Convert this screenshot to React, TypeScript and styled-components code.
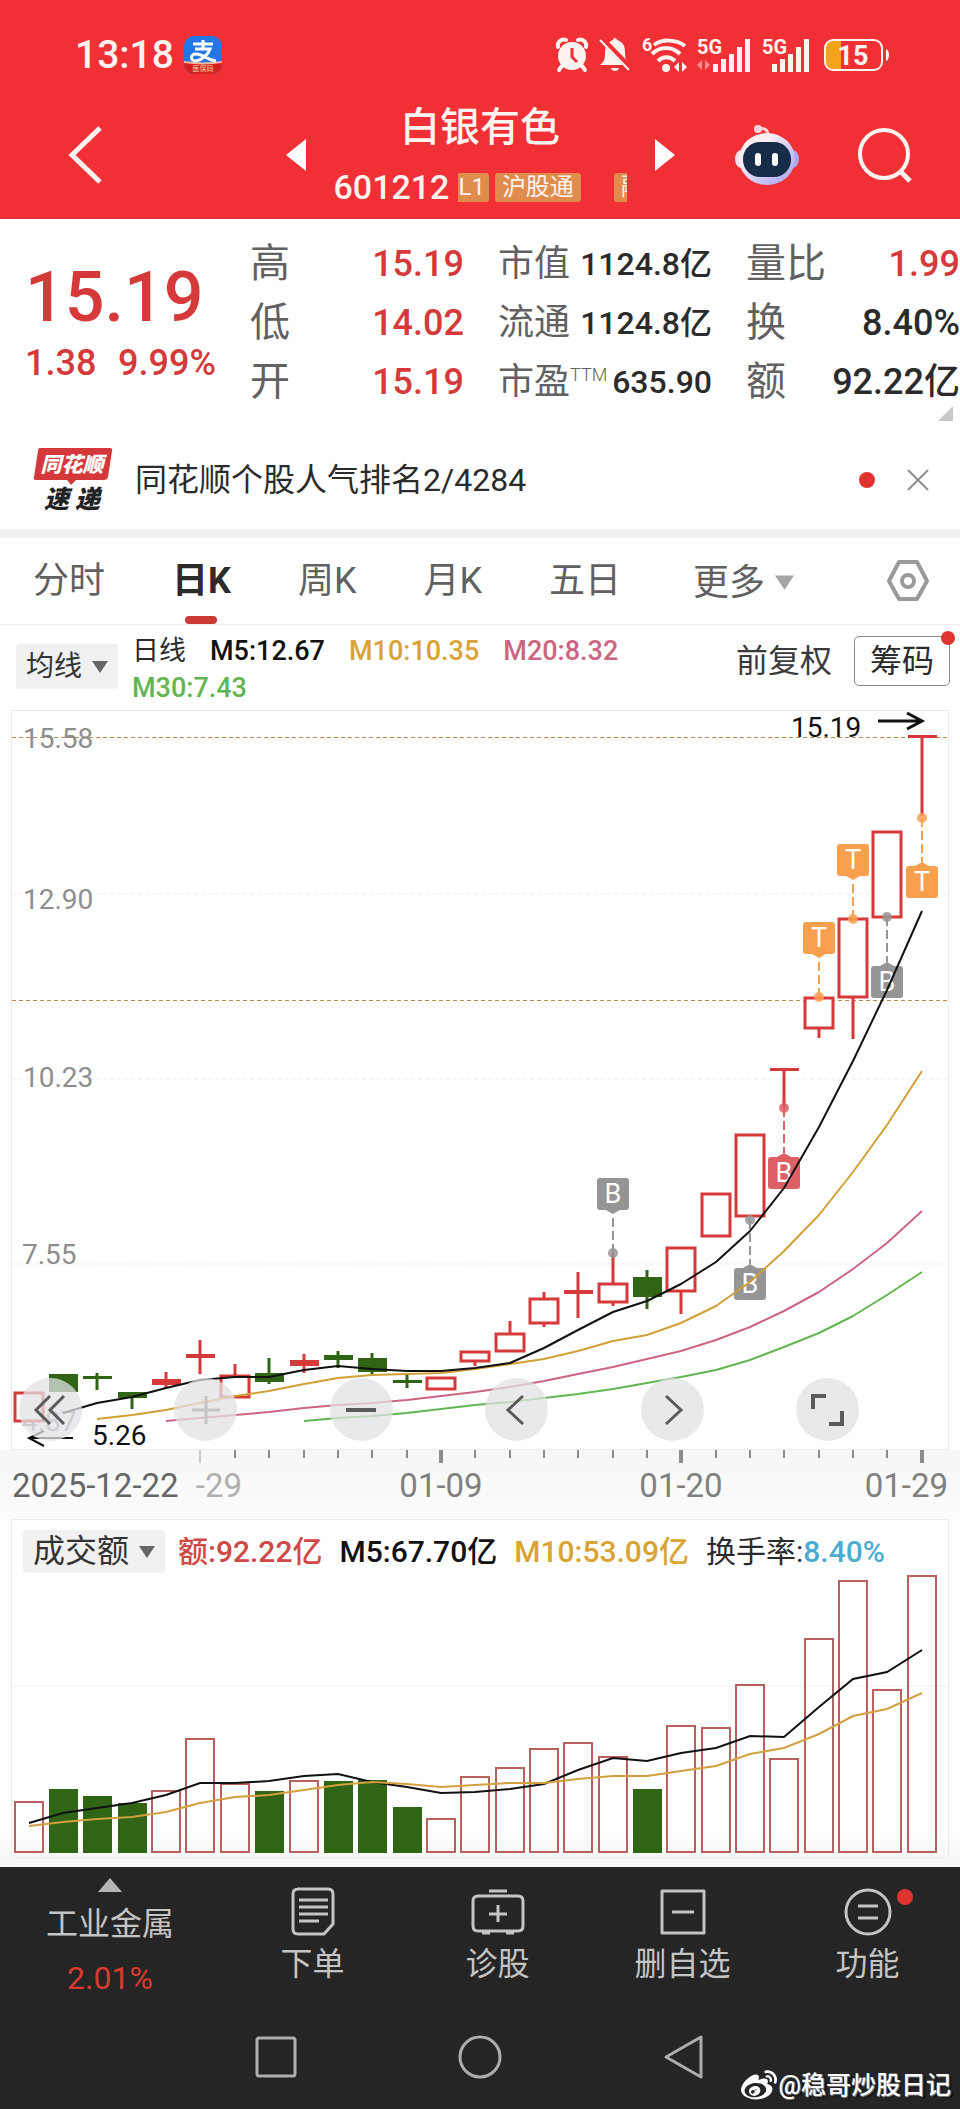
import React from "react";
import styled, { createGlobalStyle } from "styled-components";
import { FaWeibo } from "react-icons/fa";

const colors = {
  brand: "#f13035",
  rise: "#d5393a",
  fall: "#2f6515",
  gold: "#d9a336",
  pink: "#cc6680",
  lime: "#63b552",
  orange: "#f9a04f",
  marker: "#959595",
  text: "#2b2b2b",
  label: "#616161",
  dark: "#252525",
};

const GlobalStyle = createGlobalStyle`
  * { box-sizing: border-box; }
  body {
    margin: 0;
    background: #fff;
    color: ${colors.text};
    font-family: Roboto, "Noto Sans CJK SC", sans-serif;
  }
  button, select {
    margin: 0;
    padding: 0;
    border: 0;
    background: none;
    color: inherit;
    font: inherit;
    cursor: pointer;
  }
  svg { display: block; flex: none; overflow: visible; }
`;

const Page = styled.div`
  position: relative;
  overflow: hidden;
`;

/* ---------- header ---------- */

const Header = styled.header`
  background: ${colors.brand};
  color: #fff3f0;
`;

const StatusBar = styled.div`
  display: flex;
  align-items: center;
  padding: 35px 70px 15px 75px;
`;

const Clock = styled.time`
  font-size: 39px;
  line-height: 40px;
  font-weight: 500;
  margin-right: 10px;
`;

const StatusIcons = styled.div`
  display: flex;
  align-items: center;
  gap: 11px;
  margin-left: auto;
`;

const NavBar = styled.div`
  display: grid;
  grid-template-columns: 1fr auto 1fr;
  align-items: center;
  padding: 10px 48px 9px;
`;

const NavSide = styled.div<{ $end?: boolean }>`
  display: flex;
  align-items: center;
  justify-content: ${(p) => (p.$end ? "flex-end" : "flex-start")};
  gap: 59px;
  padding-left: ${(p) => (p.$end ? 0 : 20)}px;
`;

const StockSwitch = styled.div`
  display: flex;
  align-items: center;
  gap: 28px;
`;

const StockTitle = styled.div`
  width: 293px;
`;

const StockName = styled.h1`
  margin: 0;
  font-size: 40px;
  line-height: 56px;
  font-weight: 500;
  text-align: center;
`;

const CodeRow = styled.div`
  display: flex;
  align-items: center;
  gap: 9px;
  margin-top: 8px;
  font-size: 34px;
  line-height: 46px;
  font-weight: 500;
`;

const TagTicker = styled.div`
  display: flex;
  flex: 1;
  overflow: hidden;
`;

const Tag = styled.span<{ $cut?: boolean; $gap?: number }>`
  flex: none;
  padding: ${(p) => (p.$cut ? "0 4px 0 0" : "0 7px")};
  margin-left: ${(p) => p.$gap ?? 0}px;
  border-radius: ${(p) => (p.$cut ? "0 3px 3px 0" : "3px")};
  background: #e08c4c;
  font-size: 24px;
  line-height: 29px;
  font-weight: 400;
`;

/* ---------- quote ---------- */

const Quote = styled.section`
  position: relative;
  display: grid;
  grid-template-columns: 216px repeat(3, 1fr);
  column-gap: 34px;
  padding: 15px 0 22px;
`;

const PriceBlock = styled.div`
  color: ${colors.rise};
  font-weight: 500;
  padding-left: 25px;
  white-space: nowrap;
`;

const Price = styled.div`
  margin-top: 19px;
  padding-right: 16px;
  font-size: 70px;
  line-height: 88px;
  text-align: center;
`;

const Change = styled.div`
  display: flex;
  justify-content: space-between;
  font-size: 36px;
  line-height: 44px;
`;

const Stats = styled.dl`
  margin: 0;
`;

const StatRow = styled.div<{ $dense?: boolean }>`
  display: flex;
  align-items: center;
  justify-content: space-between;
  height: 59px;
  line-height: 48px;
  white-space: nowrap;
  font-size: ${(p) => (p.$dense ? 32 : 36)}px;
  dt {
    color: ${colors.label};
    font-size: ${(p) => (p.$dense ? 36 : 40)}px;
  }
`;

const StatValue = styled.dd<{ $rise?: boolean }>`
  margin: 0;
  font-weight: 500;
  color: ${(p) => (p.$rise ? colors.rise : colors.text)};
`;

const Sup = styled.sup`
  font-size: 18px;
  line-height: 18px;
  font-weight: 300;
`;

const Corner = styled.svg`
  position: absolute;
  right: 7px;
  bottom: 12px;
`;

/* ---------- notice ---------- */

const Notice = styled.section`
  display: flex;
  align-items: center;
  padding: 14px 31px 16px 33px;
  border-bottom: 9px solid #f2f2f2;
`;

const NoticeLink = styled.a`
  margin-left: 22px;
  font-size: 32px;
  line-height: 66px;
  color: inherit;
  text-decoration: none;
`;

const Dot = styled.span<{ $size: number }>`
  width: ${(p) => p.$size}px;
  height: ${(p) => p.$size}px;
  border-radius: 50%;
  background: #e03431;
`;

const NoticeActions = styled.div`
  display: flex;
  align-items: center;
  gap: 32px;
  margin-left: auto;
`;

/* ---------- tabs ---------- */

const Tabs = styled.nav`
  display: flex;
  align-items: center;
  gap: 67px;
  height: 87px;
  padding: 0 31px 0 33px;
  border-bottom: 1px solid #f3eeee;
  font-size: 36px;
  line-height: 52px;
  color: ${colors.label};
`;

const Tab = styled.button<{ $active?: boolean }>`
  position: relative;
  height: 86px;
  white-space: nowrap;
  ${(p) =>
    p.$active &&
    `
    color: ${colors.text};
    font-weight: 700;
    &::after {
      content: "";
      position: absolute;
      left: 50%;
      bottom: 0;
      width: 32px;
      height: 8px;
      margin-left: -16px;
      border-radius: 4px;
      background: #cc3a36;
    }
  `}
`;

const PickerSelect = styled.select`
  appearance: none;
  outline: none;
`;

const PlainPicker = styled.label`
  display: flex;
  align-items: center;
  gap: 9px;
  padding: 3px 0 0 5px;
`;

const TabSettings = styled.button`
  margin-left: auto;
`;

/* ---------- indicators ---------- */

const Picker = styled.label<{ $large?: boolean }>`
  display: flex;
  flex: none;
  align-items: center;
  gap: 9px;
  height: ${(p) => (p.$large ? 43 : 45)}px;
  padding: 0 10px;
  border-radius: 4px;
  background: #f1f1f1;
  color: #333;
  font-size: ${(p) => (p.$large ? 32 : 28)}px;
`;

const MaBar = styled.div`
  display: flex;
  align-items: flex-start;
  padding: 8px 10px 3px 16px;
`;

const MaPicker = styled.div`
  padding-top: 11px;
`;

const MaValues = styled.div`
  display: flex;
  flex: 1;
  flex-wrap: wrap;
  column-gap: 24px;
  margin-left: 14px;
  font-size: 27px;
  line-height: 37px;
`;

const Value = styled.span<{ $color?: string }>`
  color: ${(p) => p.$color ?? colors.text};
  font-weight: ${(p) => (p.$color ? 500 : 400)};
  white-space: nowrap;
`;

const MaActions = styled.div`
  display: flex;
  align-items: center;
  gap: 22px;
  padding-top: 3px;
  font-size: 32px;
  line-height: 48px;
`;

const PlainButton = styled.button`
  color: #3a3a3a;
`;

const ChipsButton = styled.button`
  position: relative;
  height: 50px;
  padding: 0 15px;
  border: 1px solid #8a8a8a;
  border-radius: 5px;
  ${Dot} {
    position: absolute;
    top: -6px;
    right: -6px;
  }
`;

/* ---------- charts ---------- */

const Panel = styled.section`
  position: relative;
  margin: 0 11px;
  border: 1px solid #ececf0;
`;

const ChartSvg = styled.svg`
  width: 100%;
  height: auto;
  font-family: Roboto, "Noto Sans CJK SC", sans-serif;
`;

const ChartTools = styled.div`
  position: absolute;
  left: 7px;
  right: 89px;
  bottom: 8px;
  display: flex;
  justify-content: space-between;
`;

const ToolButton = styled.button`
  display: grid;
  place-items: center;
  width: 63px;
  height: 63px;
  border-radius: 50%;
  background: rgba(226, 226, 230, 0.75);
`;

const AxisStrip = styled.div`
  padding: 0 12px;
  background: linear-gradient(#f7f7f8, #fcfcfc);
`;

const VolumeLegend = styled.div`
  display: flex;
  align-items: center;
  gap: 13px;
  padding: 10px 11px 0;
  font-size: 30px;
  line-height: 43px;
`;

const VolumeValues = styled.div`
  display: flex;
  gap: 17px;
`;

const VolumeWrap = styled.div`
  padding-bottom: 9px;
  background: linear-gradient(#fff 90%, #f4f6f6);
`;

/* ---------- footer ---------- */

const Footer = styled.footer`
  background: ${colors.dark};
  color: #c4c4c4;
`;

const ActionBar = styled.div`
  display: grid;
  grid-template-columns: 220px repeat(4, 1fr);
  height: 138px;
`;

const SectorButton = styled.button`
  display: flex;
  flex-direction: column;
  align-items: center;
  padding-top: 11px;
  font-size: 32px;
  line-height: 54px;
  strong {
    color: #d93a30;
    font-weight: 400;
  }
`;

const SectorName = styled.span`
  margin-top: 5px;
`;

const ActionButton = styled.button`
  display: flex;
  flex-direction: column;
  align-items: center;
  padding-top: 20px;
  font-size: 32px;
  line-height: 54px;
`;

const IconHolder = styled.span`
  position: relative;
  ${Dot} {
    position: absolute;
    top: 2px;
    right: -18px;
  }
`;

const SystemBar = styled.div`
  display: flex;
  align-items: center;
  justify-content: center;
  gap: 160px;
  height: 104px;
`;

const Watermark = styled.div`
  position: absolute;
  right: 9px;
  bottom: 5px;
  display: flex;
  align-items: center;
  gap: 2px;
  color: #fff;
  font-size: 25px;
  line-height: 34px;
  font-weight: 500;
  text-shadow: 1px 1px 1px #888, 3px 2px 1px #111;
`;

/* ---------- data ---------- */

type Shape = "hollow" | "red" | "green";
// shape, body top, body bottom, wick top, wick bottom
type Candle = [Shape, number, number, number, number];

const candles: Candle[] = [
  ["hollow", 1392, 1422, 1392, 1422],
  ["green", 1374, 1392, 1374, 1392],
  ["green", 1376, 1379, 1373, 1390],
  ["green", 1392, 1398, 1392, 1409],
  ["red", 1379, 1385, 1372, 1388],
  ["red", 1354, 1358, 1340, 1374],
  ["hollow", 1375, 1398, 1364, 1398],
  ["green", 1373, 1382, 1358, 1384],
  ["red", 1360, 1366, 1354, 1373],
  ["green", 1355, 1360, 1351, 1368],
  ["green", 1358, 1372, 1353, 1374],
  ["green", 1380, 1383, 1375, 1388],
  ["hollow", 1377, 1390, 1377, 1390],
  ["hollow", 1351, 1362, 1351, 1366],
  ["hollow", 1333, 1352, 1321, 1352],
  ["hollow", 1298, 1324, 1292, 1327],
  ["red", 1290, 1294, 1272, 1318],
  ["hollow", 1283, 1303, 1253, 1306],
  ["green", 1277, 1297, 1270, 1309],
  ["hollow", 1247, 1292, 1247, 1314],
  ["hollow", 1193, 1237, 1193, 1237],
  ["hollow", 1134, 1217, 1134, 1217],
  ["red", 1068, 1071, 1069, 1108],
  ["hollow", 997, 1029, 997, 1038],
  ["hollow", 918, 998, 918, 1039],
  ["hollow", 831, 918, 831, 918],
  ["red", 735, 738, 736, 816],
];

const averages = [
  { color: "#63b552", from: 8, ys: [1421, 1418, 1416, 1413, 1409, 1405, 1402, 1398, 1394, 1389, 1383, 1377, 1370, 1360, 1347, 1333, 1316, 1295, 1272] },
  { color: "#cc6680", from: 4, ys: [1421, 1418, 1415, 1412, 1408, 1405, 1403, 1400, 1396, 1392, 1387, 1381, 1374, 1367, 1359, 1351, 1340, 1327, 1311, 1292, 1269, 1243, 1211] },
  { color: "#d0a035", from: 2, ys: [1419, 1415, 1410, 1403, 1396, 1391, 1384, 1378, 1375, 1374, 1373, 1369, 1364, 1359, 1351, 1341, 1335, 1323, 1306, 1282, 1251, 1215, 1172, 1125, 1071] },
  { color: "#111", from: 1, ys: [1413, 1403, 1397, 1388, 1380, 1377, 1377, 1370, 1366, 1369, 1371, 1371, 1368, 1363, 1348, 1330, 1312, 1301, 1284, 1262, 1231, 1188, 1127, 1061, 990, 911] },
];

const markers = [
  { at: 17, label: "B", color: colors.marker, dot: 1253, box: 1178 },
  { at: 21, label: "B", color: colors.marker, dot: 1220, box: 1268 },
  { at: 22, label: "B", color: "#de6067", dot: 1108, box: 1157 },
  { at: 23, label: "T", color: colors.orange, dot: 997, box: 922 },
  { at: 24, label: "T", color: colors.orange, dot: 919, box: 844 },
  { at: 25, label: "B", color: colors.marker, dot: 917, box: 966 },
  { at: 26, label: "T", color: colors.orange, dot: 818, box: 866 },
];

const volumes = [
  1802, 1789, 1796, 1803, 1791, 1739, 1784, 1791, 1781, 1781, 1780, 1807, 1819, 1777,
  1768, 1749, 1743, 1757, 1789, 1726, 1728, 1685, 1759, 1639, 1581, 1690, 1576,
];
const fallingDays = new Set([1, 2, 3, 7, 9, 10, 11, 18]);
const volumeM5 = [
  1823, 1813, 1808, 1803, 1795, 1783, 1783, 1781, 1776, 1774, 1782, 1787, 1793, 1792,
  1789, 1784, 1770, 1758, 1761, 1753, 1748, 1736, 1737, 1707, 1679, 1672, 1650,
];
const volumeM10 = [
  1826, 1822, 1819, 1817, 1812, 1803, 1797, 1795, 1790, 1785, 1782, 1784, 1787, 1785,
  1783, 1783, 1779, 1776, 1776, 1771, 1766, 1754, 1748, 1734, 1716, 1709, 1693,
];

const xOf = (i: number) => Math.round(28.7 + i * 34.35);
const toPoints = (ys: number[], from = 0) => ys.map((y, i) => `${xOf(i + from)},${y}`).join(" ");

/* ---------- small drawings ---------- */

const Caret = ({ size = 16, color = "#666" }: { size?: number; color?: string }) => (
  <svg width={size} height={size - 4} viewBox="0 0 16 12" aria-hidden="true">
    <path d="M0 0h16L8 12z" fill={color} />
  </svg>
);

const Signal = ({ data }: { data?: boolean }) => (
  <svg width={data ? 54 : 50} height="36" viewBox={data ? "0 0 54 36" : "4 0 50 36"}>
    <text x={data ? 0 : 4} y="17" fontSize="20" fontWeight="700" fill="currentColor">5G</text>
    {data && <path d="M5 23l-5 5 5 5zM8 23l5 5-5 5z" fill="#ff8a86" />}
    {[8, 13, 18, 25, 33].map((h, i) => (
      <rect key={h} x={(data ? 16 : 14) + i * 8} y={35 - h} width="5" height={h} fill="currentColor" />
    ))}
  </svg>
);

const StatusGlyphs = () => (
  <StatusIcons>
    <svg width="32" height="34" viewBox="0 0 32 34">
      <circle cx="16" cy="18" r="14" fill="currentColor" />
      <path d="M2 9a6 6 0 0 1 8-7M22 2a6 6 0 0 1 8 7M6 28l-3 4M26 28l3 4" stroke="currentColor" strokeWidth="4" fill="none" strokeLinecap="round" />
      <path d="M16 10v9l5 5" stroke={colors.brand} strokeWidth="3" fill="none" />
    </svg>
    <svg width="32" height="34" viewBox="0 0 32 34">
      <path d="M14 2a2 2 0 0 1 4 0c6 2 8 6 8 12 0 8 2 10 5 13H1c4-3 5-6 5-12C6 8 9 4 14 2zM12 30h8c-1 4-7 4-8 0z" fill="currentColor" />
      <path d="M3 1l29 30" stroke={colors.brand} strokeWidth="6" />
      <path d="M1 2l29 30" stroke="currentColor" strokeWidth="2" />
    </svg>
    <svg width="44" height="36" viewBox="0 0 44 36">
      <text x="0" y="14" fontSize="18" fontWeight="700" fill="currentColor">6</text>
      <g fill="none" stroke="currentColor" strokeWidth="4">
        <path d="M12 8c8-6 22-6 31 1" />
        <path d="M10 17c8-8 20-8 28 0" />
        <path d="M16 24c5-5 12-5 17 0" />
      </g>
      <circle cx="24" cy="31" r="4" fill="currentColor" />
      <path d="M37 25l-5 5 5 5zM40 25l5 5-5 5z" fill="currentColor" />
    </svg>
    <Signal data />
    <Signal />
    <svg width="67" height="34" viewBox="0 0 67 34">
      <path d="M9 3h9v28H9a7 7 0 0 1-7-7V10a7 7 0 0 1 7-7z" fill="#f6a21c" />
      <rect x="2" y="2" width="57" height="30" rx="8" fill="none" stroke="currentColor" strokeWidth="2" />
      <path d="M63 11c4 1 4 11 0 12z" fill="currentColor" />
      <text x="30" y="27" fontSize="27" fontWeight="700" textAnchor="middle" fill="currentColor">15</text>
    </svg>
  </StatusIcons>
);

const AlipayBadge = () => (
  <svg width="38" height="38" viewBox="0 0 38 38">
    <clipPath id="alipay"><rect width="38" height="38" rx="10" /></clipPath>
    <g clipPath="url(#alipay)">
      <rect width="38" height="38" fill="#2376e5" />
      <path d="M0 26q19 3 38 0v12H0z" fill="#d8201f" />
      <path d="M0 26q19 3 38 0" stroke="#f6b9a0" strokeWidth="2" fill="none" />
    </g>
    <g stroke="#fff" fill="none" strokeWidth="3">
      <path d="M9 8h20M19 4v9M11 13h15c-2 6-8 11-14 12-6 0-6-7 0-7 7 0 11 6 20 7" />
    </g>
    <text x="19" y="35" fontSize="7" textAnchor="middle" fill="#ffd9a8">医保码</text>
  </svg>
);

const Robot = () => (
  <svg width="64" height="60" viewBox="0 0 64 60">
    <defs>
      <linearGradient id="shell" x1="0" y1="0" x2="1" y2="1">
        <stop offset="0.3" stopColor="#fbeff2" />
        <stop offset="0.8" stopColor="#b9b4f5" />
      </linearGradient>
    </defs>
    <path d="M23 4c8-2 10 2 10 7" stroke="#fbd6d8" strokeWidth="3" fill="none" />
    <circle cx="23" cy="4" r="4" fill="#fbd6d8" />
    <ellipse cx="6" cy="34" rx="6" ry="9" fill="#f7dfe6" />
    <ellipse cx="58" cy="34" rx="6" ry="9" fill="#a9a5ee" />
    <ellipse cx="32" cy="34" rx="28" ry="26" fill="url(#shell)" />
    <rect x="8" y="17" width="48" height="35" rx="17" fill="#172c49" />
    <rect x="20" y="28" width="6" height="13" rx="3" fill="#fff" />
    <rect x="37" y="28" width="6" height="13" rx="3" fill="#fff" />
  </svg>
);

const BrandLogo = () => (
  <svg width="80" height="66" viewBox="0 0 80 66" role="img" aria-label="同花顺速递">
    <path d="M7 1h70q3 0 2 3l-4 26q-1 3-4 3H43l-5 5-4-5H3q-3 0-2-3L5 4q0-3 2-3z" fill="#d4383a" />
    <g fontWeight="900" fontStyle="italic" textAnchor="middle">
      <text x="39" y="25" fontSize="21" fill="#fff">同花顺</text>
      <text x="39" y="61" fontSize="25" fill="#222" xmlSpace="preserve">速 递</text>
    </g>
  </svg>
);

const CandleMark = ({ i, candle }: { i: number; candle: Candle }) => {
  const [shape, top, bottom, high, low] = candle;
  const x = xOf(i);
  const color = shape === "green" ? colors.fall : colors.rise;
  return (
    <g stroke={color} strokeWidth="3">
      {high < top && <path d={`M${x} ${high}V${top}`} />}
      {low > bottom && <path d={`M${x} ${bottom}V${low}`} />}
      {shape === "hollow" ? (
        <rect x={x - 14} y={top + 1} width="28" height={bottom - top - 2} fill="#fff" />
      ) : (
        <rect x={x - 14} y={top} width="29" height={bottom - top} fill={color} stroke="none" />
      )}
    </g>
  );
};

const TradeMarker = ({ at, label, color, dot, box }: (typeof markers)[number]) => {
  const x = xOf(at);
  const below = box > dot;
  const tip = below ? box - 4 : box + 36;
  const base = below ? box : box + 32;
  return (
    <g fill={color}>
      <path d={`M${x} ${dot}V${tip}`} stroke={color} strokeWidth="2" strokeDasharray="9 4" />
      <circle cx={x} cy={dot} r="5" fillOpacity="0.85" />
      <rect x={x - 16} y={box} width="32" height="32" rx="3" />
      <path d={`M${x - 7} ${base}L${x} ${tip}L${x + 7} ${base}z`} />
      <text x={x} y={box + 25} fontSize="27" textAnchor="middle" fill="#fff">{label}</text>
    </g>
  );
};

const PriceChart = () => (
  <ChartSvg viewBox="12 711 936 738" role="img" aria-label="日K线图">
    <g stroke="#ededed" strokeDasharray="4 3">
      {[894, 1079, 1264].map((y) => <path key={y} d={`M12 ${y}H948`} />)}
    </g>
    <g stroke="#bd8a4e" strokeWidth="1" strokeDasharray="4 3">
      <path d="M12 737.5H948" />
      <path d="M12 1000.5H948" />
    </g>
    <g fontSize="28" fill="#8e8e8e">
      <text x="23" y="748">15.58</text>
      <text x="23" y="909">12.90</text>
      <text x="23" y="1087">10.23</text>
      <text x="22" y="1264">7.55</text>
      <text x="22" y="1431">4.87</text>
    </g>
    {candles.map((c, i) => <CandleMark key={i} i={i} candle={c} />)}
    {markers.map((m) => <TradeMarker key={m.at} {...m} />)}
    {averages.map((a) => (
      <polyline key={a.color} points={toPoints(a.ys, a.from)} fill="none" stroke={a.color} strokeWidth="2" strokeLinejoin="round" />
    ))}
    <g stroke="#111" strokeWidth="2" fill="none">
      <path d="M73 1438H30M44 1431L29 1438L44 1446" />
      <path d="M878 721H921M907 713L922 721L907 729" strokeWidth="3" />
    </g>
    <g fontSize="28" fill="#111">
      <text x="92" y="1445">5.26</text>
      <text x="791" y="737">15.19</text>
    </g>
  </ChartSvg>
);

const DateAxis = () => (
  <ChartSvg viewBox="12 1450 936 69" role="img" aria-label="日期">
    {Array.from({ length: 22 }, (_, n) => n + 5).map((i) => {
      const major = i === 12 || i === 19 || i === 26;
      return (
        <path key={i} d={`M${xOf(i)} 1450V${major || i === 5 ? 1463 : 1458}`} stroke={i === 5 ? "#ccc" : "#8c8c8c"} strokeWidth={major ? 4 : 2} />
      );
    })}
    <g fontSize="33" fill="#808080">
      <text x="242" y="1497" textAnchor="end" fill="#b0b0b0">-29</text>
      <text x="12" y="1497" fill="#666">2025-12-22</text>
      <text x={xOf(12)} y="1497" textAnchor="middle">01-09</text>
      <text x={xOf(19)} y="1497" textAnchor="middle">01-20</text>
      <text x="948" y="1497" textAnchor="end">01-29</text>
    </g>
  </ChartSvg>
);

const VolumeChart = () => (
  <ChartSvg viewBox="12 1573 936 284" role="img" aria-label="成交额">
    <path d="M12 1686H948" stroke="#f0f0f0" />
    {volumes.map((top, i) =>
      fallingDays.has(i) ? (
        <rect key={i} x={xOf(i) - 14} y={top} width="29" height={1853 - top} fill={colors.fall} />
      ) : (
        <rect key={i} x={xOf(i) - 14} y={top} width="28" height={1852 - top} fill="none" stroke="#b9605f" strokeWidth="2" />
      )
    )}
    <polyline points={toPoints(volumeM5)} fill="none" stroke="#111" strokeWidth="2" />
    <polyline points={toPoints(volumeM10)} fill="none" stroke="#d3a040" strokeWidth="2" />
  </ChartSvg>
);

const tools: { name: string; path: string; width?: number; faint?: boolean }[] = [
  { name: "最早", path: "M17 4L3 18L17 32M31 4L17 18L31 32" },
  { name: "放大", path: "M4 18H32M18 4V32", faint: true },
  { name: "缩小", path: "M3 18H33", width: 4 },
  { name: "向左", path: "M24 4L9 18L24 32" },
  { name: "向右", path: "M12 4L27 18L12 32" },
  { name: "全屏", path: "M4 17V4H17M33 19V32H20", width: 4 },
];

const columns: { dense?: boolean; rows: [React.ReactNode, string, boolean][] }[] = [
  { rows: [["高", "15.19", true], ["低", "14.02", true], ["开", "15.19", true]] },
  { dense: true, rows: [["市值", "1124.8亿", false], ["流通", "1124.8亿", false], [<>市盈<Sup>TTM</Sup></>, "635.90", false]] },
  { rows: [["量比", "1.99", true], ["换", "8.40%", false], ["额", "92.22亿", false]] },
];

const actions = [
  {
    name: "下单",
    icon: <path d="M6 2H37Q42 2 42 7V37L33 47H7Q2 47 2 42V7Q2 2 7 2M8 13H37M8 20H37M8 27H37M8 34H28" />,
  },
  {
    name: "诊股",
    icon: <path d="M2 9H42Q47 9 47 14V39Q47 44 42 44H2Q-3 44 -3 39V14Q-3 9 2 9M13 4H31M6 46H14M30 46H38M22 18V35M13 27H31" />,
  },
  { name: "删自选", icon: <path d="M1 4H43V46H1ZM11 25H33" /> },
  {
    name: "功能",
    dot: true,
    icon: <path d="M22 3A22 22 0 1 1 22 47A22 22 0 1 1 22 3M12 19H32M12 31H32" />,
  },
];

export default function App() {
  return (
    <Page>
      <GlobalStyle />
      <Header>
        <StatusBar>
          <Clock>13:18</Clock>
          <AlipayBadge />
          <StatusGlyphs />
        </StatusBar>
        <NavBar>
          <NavSide>
            <button aria-label="返回">
              <svg width="34" height="58" viewBox="0 0 34 58" fill="none" stroke="currentColor" strokeWidth="5">
                <path d="M32 2L4 29L32 56" />
              </svg>
            </button>
          </NavSide>
          <StockSwitch>
            <button aria-label="上一只">
              <svg width="20" height="32"><path d="M20 0v32L0 16z" fill="#fff" /></svg>
            </button>
            <StockTitle>
              <StockName>白银有色</StockName>
              <CodeRow>
                601212
                <TagTicker>
                  <Tag $cut>L1</Tag>
                  <Tag $gap={6}>沪股通</Tag>
                  <Tag $gap={33}>融</Tag>
                </TagTicker>
              </CodeRow>
            </StockTitle>
            <button aria-label="下一只">
              <svg width="20" height="32"><path d="M0 0v32L20 16z" fill="#fff" /></svg>
            </button>
          </StockSwitch>
          <NavSide $end>
            <button aria-label="智能助手"><Robot /></button>
            <button aria-label="搜索">
              <svg width="54" height="54" viewBox="0 0 54 54" fill="none" stroke="currentColor" strokeWidth="4">
                <circle cx="26" cy="26" r="24" />
                <path d="M42 43L52 53" strokeWidth="5" />
              </svg>
            </button>
          </NavSide>
        </NavBar>
      </Header>

      <Quote>
        <PriceBlock>
          <Price>15.19</Price>
          <Change><span>1.38</span><span>9.99%</span></Change>
        </PriceBlock>
        {columns.map((column, c) => (
          <Stats key={c}>
            {column.rows.map(([label, value, rise], r) => (
              <StatRow key={r} $dense={column.dense}>
                <dt>{label}</dt>
                <StatValue $rise={rise}>{value}</StatValue>
              </StatRow>
            ))}
          </Stats>
        ))}
        <Corner width="15" height="15"><path d="M15 0v15H0z" fill="#c8c8c8" /></Corner>
      </Quote>

      <Notice>
        <BrandLogo />
        <NoticeLink href="#rank">同花顺个股人气排名2/4284</NoticeLink>
        <NoticeActions>
          <Dot $size={16} />
          <button aria-label="关闭">
            <svg width="22" height="22" stroke="#8f8f8f" strokeWidth="2"><path d="M1 1L21 21M21 1L1 21" /></svg>
          </button>
        </NoticeActions>
      </Notice>

      <Tabs>
        <Tab>分时</Tab>
        <Tab $active>日K</Tab>
        <Tab>周K</Tab>
        <Tab>月K</Tab>
        <Tab>五日</Tab>
        <PlainPicker>
          <PickerSelect aria-label="更多周期"><option>更多</option></PickerSelect>
          <Caret size={19} color="#a5a5a5" />
        </PlainPicker>
        <TabSettings aria-label="设置">
          <svg width="42" height="42" viewBox="0 0 42 42" fill="none" stroke="#9a9a9a" strokeWidth="4" strokeLinejoin="round">
            <path d="M12 2H30L40 21L30 39H12L2 21Z" />
            <circle cx="21" cy="21" r="6" />
          </svg>
        </TabSettings>
      </Tabs>

      <MaBar>
        <MaPicker>
          <Picker>
            <PickerSelect aria-label="主图指标"><option>均线</option></PickerSelect>
            <Caret />
          </Picker>
        </MaPicker>
        <MaValues>
          <Value>日线</Value>
          <Value $color="#111">M5:12.67</Value>
          <Value $color={colors.gold}>M10:10.35</Value>
          <Value $color={colors.pink}>M20:8.32</Value>
          <Value $color={colors.lime}>M30:7.43</Value>
        </MaValues>
        <MaActions>
          <PlainButton>前复权</PlainButton>
          <ChipsButton>筹码<Dot $size={14} /></ChipsButton>
        </MaActions>
      </MaBar>

      <Panel>
        <PriceChart />
        <ChartTools>
          {tools.map((t) => (
            <ToolButton key={t.name} aria-label={t.name}>
              <svg width="36" height="36" viewBox="0 0 36 36" fill="none" stroke={t.faint ? "#c6c6c6" : "#5a5a5a"} strokeWidth={t.width ?? 3}>
                <path d={t.path} />
              </svg>
            </ToolButton>
          ))}
        </ChartTools>
      </Panel>
      <AxisStrip><DateAxis /></AxisStrip>

      <VolumeWrap>
        <Panel>
          <VolumeLegend>
            <Picker $large>
              <PickerSelect aria-label="副图指标"><option>成交额</option></PickerSelect>
              <Caret />
            </Picker>
            <VolumeValues>
              <Value $color="#cf4a46">额:92.22亿</Value>
              <Value $color="#111">M5:67.70亿</Value>
              <Value $color={colors.gold}>M10:53.09亿</Value>
              <Value>换手率:<Value $color="#4bacd0">8.40%</Value></Value>
            </VolumeValues>
          </VolumeLegend>
          <VolumeChart />
        </Panel>
      </VolumeWrap>

      <Footer>
        <ActionBar>
          <SectorButton>
            <svg width="24" height="14"><path d="M12 0L24 14H0z" fill="#b5b5b5" /></svg>
            <SectorName>工业金属</SectorName>
            <strong>2.01%</strong>
          </SectorButton>
          {actions.map((a) => (
            <ActionButton key={a.name}>
              <IconHolder>
                <svg width="54" height="50" viewBox="-5 0 54 50" fill="none" stroke="currentColor" strokeWidth="3" strokeLinejoin="round">
                  {a.icon}
                </svg>
                {a.dot && <Dot $size={16} />}
              </IconHolder>
              {a.name}
            </ActionButton>
          ))}
        </ActionBar>
        <SystemBar>
          <button aria-label="最近任务">
            <svg width="44" height="44" fill="none" stroke="#adadad" strokeWidth="3"><rect x="3" y="3" width="38" height="38" rx="2" /></svg>
          </button>
          <button aria-label="主屏幕">
            <svg width="44" height="44" fill="none" stroke="#adadad" strokeWidth="3"><circle cx="22" cy="22" r="20" /></svg>
          </button>
          <button aria-label="后退">
            <svg width="44" height="44" fill="none" stroke="#adadad" strokeWidth="3" strokeLinejoin="round"><path d="M39 2V42L4 22Z" /></svg>
          </button>
        </SystemBar>
      </Footer>
      <Watermark>
        <FaWeibo size={36} />
        @稳哥炒股日记
      </Watermark>
    </Page>
  );
}
